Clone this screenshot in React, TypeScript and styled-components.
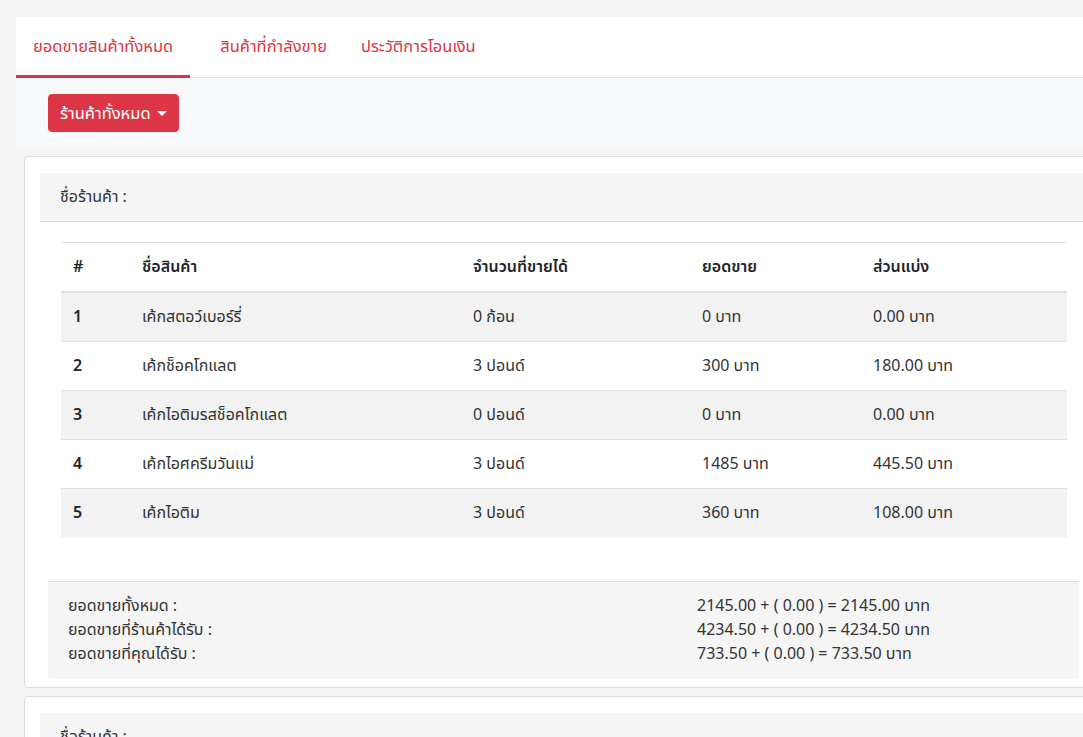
import React from "react";
import styled, { createGlobalStyle } from "styled-components";

const Global = createGlobalStyle`
  html, body { margin: 0; padding: 0; }
  body {
    background: #f4f4f4;
    font-family: "Noto Sans Thai", "Noto Sans", "Liberation Sans", sans-serif;
    font-size: 16px;
    color: #212529;
    overflow: hidden;
    width: 1083px;
    height: 737px;
  }
`;

const Page = styled.div`
  padding: 17px 0 0 16px;
  width: 1200px;
`;

const TabSection = styled.section`
  width: 1100px;
`;

const TabBar = styled.nav`
  display: flex;
  background: #fff;
  border-bottom: 1px solid #dee2e6;
  height: 60px;
`;

const Tab = styled.a<{ $active?: boolean }>`
  display: flex;
  align-items: center;
  padding: 1px 17px 0;
  margin-right: ${(p) => (p.$active ? "13px" : "0")};
  color: #dc3545;
  font-size: 16.5px;
  text-decoration: none;
  border-bottom: 3px solid ${(p) => (p.$active ? "#dc3545" : "transparent")};
  margin-bottom: -1px;
`;

const Toolbar = styled.div`
  background: #f7f8fa;
  padding: 16px 32px;
`;

const DropButton = styled.button`
  display: inline-flex;
  align-items: center;
  gap: 4px;
  height: 38px;
  padding: 0 11px;
  background: #dc3545;
  border: 1px solid #dc3545;
  border-radius: 4px;
  color: #fff;
  font-family: inherit;
  font-size: 16.5px;
  cursor: pointer;
`;

const Caret = styled.span`
  display: inline-block;
  width: 0;
  height: 0;
  border-left: 5px solid transparent;
  border-right: 5px solid transparent;
  border-top: 5px solid #fff;
  margin-left: 2px;
`;

const Card = styled.div`
  margin: 8px 0 0 8px;
  width: 1100px;
  background: #fff;
  border: 1px solid #dcdcdc;
  border-radius: 4px;
  padding: 16px 15px 8px;
  box-sizing: border-box;
`;

const CardHeader = styled.div`
  background: #f5f5f5;
  border-bottom: 1px solid #dcdcdc;
  padding: 12px 20px;
  line-height: 24px;
  font-size: 16px;
  color: #333;
`;

const CardBody = styled.div`
  padding: 20px 0 44px 21px;
`;

const Table = styled.table`
  width: 1006px;
  border-collapse: collapse;
  table-layout: fixed;
  font-size: 16px;
`;

const Th = styled.th`
  text-align: left;
  font-weight: 600;
  padding: 12px;
  line-height: 24px;
  border-top: 1px solid #dee2e6;
  border-bottom: 2px solid #dee2e6;
  color: #212529;
`;

const Tr = styled.tr<{ $striped: boolean }>`
  background: ${(p) => (p.$striped ? "#f2f2f2" : "#fff")};
`;

const Td = styled.td<{ $bold?: boolean }>`
  padding: 12px;
  line-height: 24px;
  border-top: 1px solid #dee2e6;
  font-weight: ${(p) => (p.$bold ? 600 : 400)};
  color: ${(p) => (p.$bold ? "#212529" : "#333")};
`;

const Footer = styled.div`
  margin-left: 8px;
  width: 1031px;
  background: #f5f5f5;
  border-top: 1px solid #dcdcdc;
  border-radius: 0 0 4px 4px;
  padding: 12px 20px 13px;
  box-sizing: border-box;
  display: grid;
  grid-template-columns: 629px 1fr;
  line-height: 24px;
  font-size: 16px;
  color: #333;
`;

const Lines = styled.div`
  display: flex;
  flex-direction: column;
`;

const rows = [
  ["1", "เค้กสตอว์เบอร์รี่", "0 ก้อน", "0 บาท", "0.00 บาท"],
  ["2", "เค้กช็อคโกแลต", "3 ปอนด์", "300 บาท", "180.00 บาท"],
  ["3", "เค้กไอติมรสช็อคโกแลต", "0 ปอนด์", "0 บาท", "0.00 บาท"],
  ["4", "เค้กไอศครีมวันแม่", "3 ปอนด์", "1485 บาท", "445.50 บาท"],
  ["5", "เค้กไอติม", "3 ปอนด์", "360 บาท", "108.00 บาท"],
];

export default function App() {
  return (
    <Page>
      <Global />
      <TabSection>
        <TabBar>
          <Tab $active>ยอดขายสินค้าทั้งหมด</Tab>
          <Tab>สินค้าที่กำลังขาย</Tab>
          <Tab>ประวัติการโอนเงิน</Tab>
        </TabBar>
        <Toolbar>
          <DropButton>
            ร้านค้าทั้งหมด
            <Caret />
          </DropButton>
        </Toolbar>
      </TabSection>

      <Card>
        <CardHeader>ชื่อร้านค้า :</CardHeader>
        <CardBody>
          <Table>
            <colgroup>
              <col style={{ width: 69 }} />
              <col style={{ width: 331 }} />
              <col style={{ width: 229 }} />
              <col style={{ width: 171 }} />
              <col style={{ width: 206 }} />
            </colgroup>
            <thead>
              <tr>
                <Th>#</Th>
                <Th>ชื่อสินค้า</Th>
                <Th>จำนวนที่ขายได้</Th>
                <Th>ยอดขาย</Th>
                <Th>ส่วนแบ่ง</Th>
              </tr>
            </thead>
            <tbody>
              {rows.map((r, i) => (
                <Tr key={r[0]} $striped={i % 2 === 0}>
                  <Td $bold>{r[0]}</Td>
                  <Td>{r[1]}</Td>
                  <Td>{r[2]}</Td>
                  <Td>{r[3]}</Td>
                  <Td>{r[4]}</Td>
                </Tr>
              ))}
            </tbody>
          </Table>
        </CardBody>
        <Footer>
          <Lines>
            <span>ยอดขายทั้งหมด :</span>
            <span>ยอดขายที่ร้านค้าได้รับ :</span>
            <span>ยอดขายที่คุณได้รับ :</span>
          </Lines>
          <Lines>
            <span>2145.00 + ( 0.00 ) = 2145.00 บาท</span>
            <span>4234.50 + ( 0.00 ) = 4234.50 บาท</span>
            <span>733.50 + ( 0.00 ) = 733.50 บาท</span>
          </Lines>
        </Footer>
      </Card>

      <Card>
        <CardHeader>ชื่อร้านค้า :</CardHeader>
      </Card>
    </Page>
  );
}
